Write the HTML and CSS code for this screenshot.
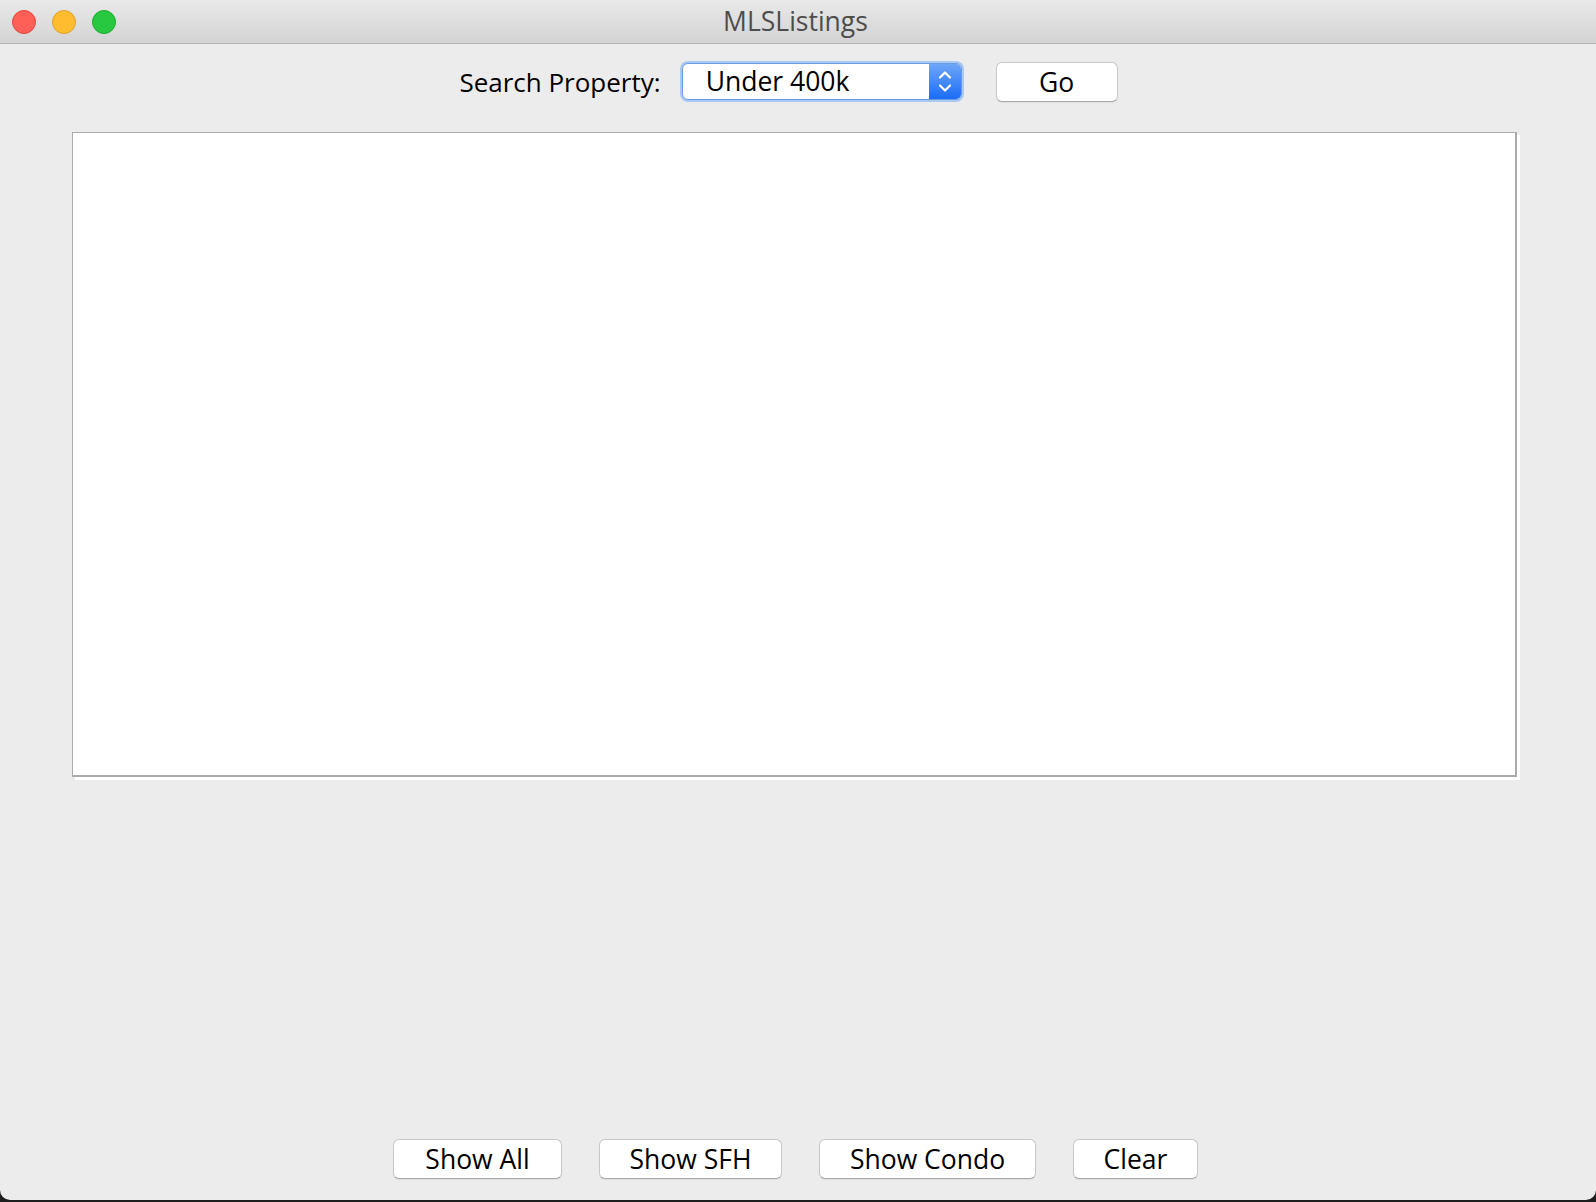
FILE: index.html
```html
<!DOCTYPE html>
<html>
<head>
<meta charset="utf-8">
<title>MLSListings</title>
<link rel="stylesheet" href="styles.css">
</head>
<body>
<div class="window">
  <div class="titlebar">
    <div class="lights">
      <span class="light red"></span>
      <span class="light yellow"></span>
      <span class="light green"></span>
    </div>
    <div class="title">MLSListings</div>
    <div class="tb-spacer"></div>
  </div>

  <div class="toprow">
    <span class="label">Search Property:</span>
    <div class="combo">
      <span class="combo-value">Under 400k</span>
      <span class="combo-arrow">
        <svg width="32" height="35" viewBox="0 0 32 35">
          <polyline points="11,13.5 16,8.5 21,13.5" fill="none" stroke="#fff" stroke-width="2.2" stroke-linecap="round" stroke-linejoin="round"/>
          <polyline points="11,21.5 16,26.5 21,21.5" fill="none" stroke="#fff" stroke-width="2.2" stroke-linecap="round" stroke-linejoin="round"/>
        </svg>
      </span>
    </div>
    <button class="btn go">Go</button>
  </div>

  <div class="textarea"></div>

  <div class="spacer"></div>

  <div class="bottomrow">
    <button class="btn b-all">Show All</button>
    <button class="btn b-sfh">Show SFH</button>
    <button class="btn b-condo">Show Condo</button>
    <button class="btn b-clear">Clear</button>
  </div>
</div>
</body>
</html>
```

FILE: styles.css
```css
html, body {
  margin: 0;
  padding: 0;
}

body {
  width: 1596px;
  height: 1202px;
  background: #1e1e1e;
  overflow: hidden;
  font-family: "Open Sans", "DejaVu Sans", sans-serif;
}

.window {
  height: 1200px;
  background: #ececec;
  border-radius: 0 0 10px 10px;
  display: flex;
  flex-direction: column;
  overflow: hidden;
}

.titlebar {
  height: 43px;
  border-bottom: 1px solid #b3b3b3;
  background: linear-gradient(#e9e9e9, #d3d3d3);
  display: grid;
  grid-template-columns: 1fr auto 1fr;
  align-items: center;
  flex: none;
}

.lights {
  display: flex;
  gap: 16px;
  padding-left: 12px;
}

.light {
  width: 24px;
  height: 24px;
  border-radius: 50%;
  box-sizing: border-box;
}

.red { background: #fe5f57; border: 1px solid #e2463f; }
.yellow { background: #febc2e; border: 1px solid #e0a02a; }
.green { background: #28c840; border: 1px solid #1aad2e; }

.title {
  font-size: 26.5px;
  color: #4d4d4d;
  line-height: 43px;
  padding-right: 5px;
}

.toprow {
  margin-top: 17px;
  height: 41px;
  display: flex;
  justify-content: center;
  align-items: center;
  padding-right: 19px;
  flex: none;
}

.label {
  font-size: 26px;
  color: #000;
  margin-right: 21px;
}

.combo {
  width: 280px;
  height: 37px;
  box-sizing: border-box;
  border: 1px solid #6b9be3;
  border-radius: 6px;
  box-shadow: 0 0 0 2px #a9c8f2;
  background: #fff;
  display: flex;
  align-items: center;
  margin-right: 34px;
  overflow: hidden;
}

.combo-value {
  flex: 1;
  font-size: 26.5px;
  color: #000;
  padding-left: 23px;
  line-height: 35px;
}

.combo-arrow {
  width: 32px;
  height: 35px;
  background: linear-gradient(#6ea6f8, #1a6cf6);
  display: flex;
  align-items: center;
  justify-content: center;
}

.combo-arrow svg {
  display: block;
}

.btn {
  height: 40px;
  box-sizing: border-box;
  background: #fff;
  border: 1px solid #c8c8c8;
  border-bottom-color: #a8a8a8;
  border-radius: 6px;
  box-shadow: 0 1px 1px rgba(0, 0, 0, 0.06);
  font-family: "Open Sans", "DejaVu Sans", sans-serif;
  font-size: 26.5px;
  color: #000;
  padding: 0;
  line-height: 38px;
  text-align: center;
}

.go { width: 122px; }

.textarea {
  margin-top: 30px;
  margin-left: 72px;
  width: 1445px;
  height: 645px;
  box-sizing: border-box;
  background: #fff;
  border: 1px solid #ababab;
  border-right-width: 2px;
  border-bottom-width: 2px;
  box-shadow: 3px 3px 0 #fff;
  flex: none;
}

.spacer {
  flex: 1;
}

.bottomrow {
  display: flex;
  justify-content: center;
  gap: 37px;
  padding-bottom: 21px;
  padding-right: 5px;
  flex: none;
}

.b-all { width: 169px; }
.b-sfh { width: 183px; }
.b-condo { width: 217px; }
.b-clear { width: 125px; }
```
